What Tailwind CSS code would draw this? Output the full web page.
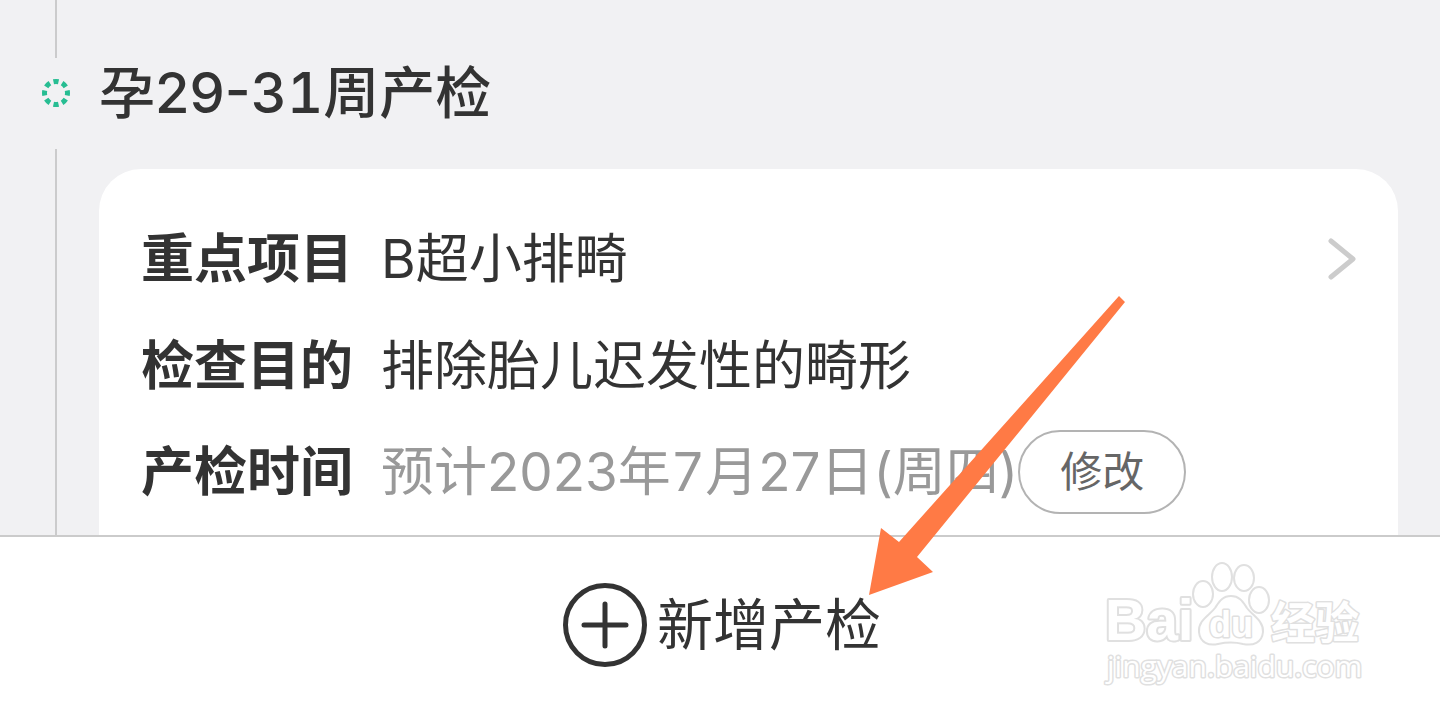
<!DOCTYPE html>
<html lang="zh-CN">
<head>
    <meta charset="UTF-8">
    <meta name="viewport" content="width=device-width, initial-scale=1.0">
    <title>产检</title>
    <script src="https://cdn.jsdelivr.net/npm/@tailwindcss/browser@4"></script>
    <style>
        body {
            font-family: 'Inter', 'Noto Sans CJK SC', sans-serif;
        }
    </style>
</head>
<body class="relative min-h-screen flex flex-col bg-[#f1f1f3] text-[#333333]">
    <main class="flex-1 flex flex-col pl-[42px] pr-[42px]">
        <!-- Stage heading -->
        <div class="flex gap-[29px]">
            <div class="w-7 flex flex-col items-center">
                <div class="w-[2px] h-[58px] bg-[#cbcbcc]"></div>
                <svg class="mt-[21px] w-7 h-7" viewBox="0 0 28 28" fill="none">
                    <circle cx="14" cy="14" r="11.5" stroke="#27bd92" stroke-width="5" pathLength="16" stroke-dasharray="1.15 0.85" stroke-dashoffset="0.575"></circle>
                </svg>
            </div>
            <h2 class="h-[149px] pt-[53px] text-[56px] leading-[80px] font-medium">孕29-<span class="tabular-nums">31</span>周产检</h2>
        </div>

        <!-- Timeline and card -->
        <div class="flex-1 flex gap-[29px]">
            <div class="w-7 flex justify-center">
                <div class="w-[2px] bg-[#cbcbcc]"></div>
            </div>
            <section class="flex-1 mt-5 rounded-t-[42px] bg-white pt-[36px] pb-2 px-[42px] text-[53px] leading-[106px]">
                <div class="flex items-center h-[108px]">
                    <h3 class="w-[240px] shrink-0 font-bold">重点项目</h3>
                    <p class="flex-1">B超小排畸</p>
                    <a href="#" aria-label="查看详情">
                        <svg class="w-7 h-[42px]" viewBox="0 0 28 42" fill="none" stroke="#cccccc" stroke-width="5" stroke-linecap="round" stroke-linejoin="round">
                            <path d="M3 3L25 21L3 39"></path>
                        </svg>
                    </a>
                </div>
                <div class="flex items-center h-[106px]">
                    <h3 class="w-[240px] shrink-0 font-bold">检查目的</h3>
                    <p>排除胎儿迟发性的畸形</p>
                </div>
                <div class="flex items-center h-[106px]">
                    <h3 class="w-[240px] shrink-0 font-bold">产检时间</h3>
                    <p class="text-[#999999] whitespace-nowrap">预计2023年<span class="tabular-nums">7月</span>27日(周四)</p>
                    <button class="w-[168px] h-[84px] shrink-0 rounded-full border-2 border-[#b3b3b3] text-[42px] leading-[80px] text-[#666666]">修改</button>
                </div>
            </section>
        </div>
    </main>

    <footer class="relative h-[182px] pl-1 pb-1 flex items-center justify-center bg-white border-t-2 border-[#cbcbcb]">
        <button class="flex items-center gap-[10px] text-[56px] leading-[80px]">
            <svg class="w-[84px] h-[84px]" viewBox="0 0 84 84" fill="none" stroke="#333333" stroke-width="5" stroke-linecap="round">
                <circle cx="42" cy="42" r="39.5"></circle>
                <path d="M42 21V63M21 42H63"></path>
            </svg>
            新增产检
        </button>

        <!-- Watermark -->
        <svg class="absolute right-[70px] top-[18px] w-[270px] h-[140px]" viewBox="0 0 270 140" fill="#ffffff" stroke="#e0e0e0" stroke-width="2" stroke-linejoin="round">
            <text x="5" y="85" class="font-['Liberation_Sans'] font-bold text-[57px]" paint-order="stroke" stroke-width="4">Bai</text>
            <ellipse cx="103" cy="39" rx="10" ry="13"></ellipse>
            <ellipse cx="122" cy="22" rx="10" ry="14"></ellipse>
            <ellipse cx="144" cy="23" rx="10" ry="13"></ellipse>
            <ellipse cx="159" cy="45" rx="10" ry="13"></ellipse>
            <path d="M131 41C122 41 119 47 115 53C109 61 98 65 99 77C100 88 109 91 118 89C127 87 135 87 143 89C153 91 162 88 163 77C164 66 152 60 147 53C143 47 140 41 131 41Z"></path>
            <text x="109" y="82" class="font-['Liberation_Sans'] font-bold text-[36px]" paint-order="stroke" stroke-width="3">du</text>
            <text x="171" y="84" class="font-['Noto_Sans_CJK_SC'] font-bold text-[44px]" paint-order="stroke" stroke-width="3">经验</text>
            <text x="7" y="122" class="font-['Open_Sans'] text-[30px]" paint-order="stroke" stroke-width="3">jingyan.baidu.com</text>
        </svg>
    </footer>

    <!-- Pointer to the add button -->
    <svg class="absolute left-[868px] top-[295px] w-[260px] h-[302px] pointer-events-none" viewBox="868 295 260 302" fill="#ff7a45">
        <path d="M1119 296L1125 302L917 557L933 572L869 595L881 528L899 542Z"></path>
    </svg>
</body>
</html>
